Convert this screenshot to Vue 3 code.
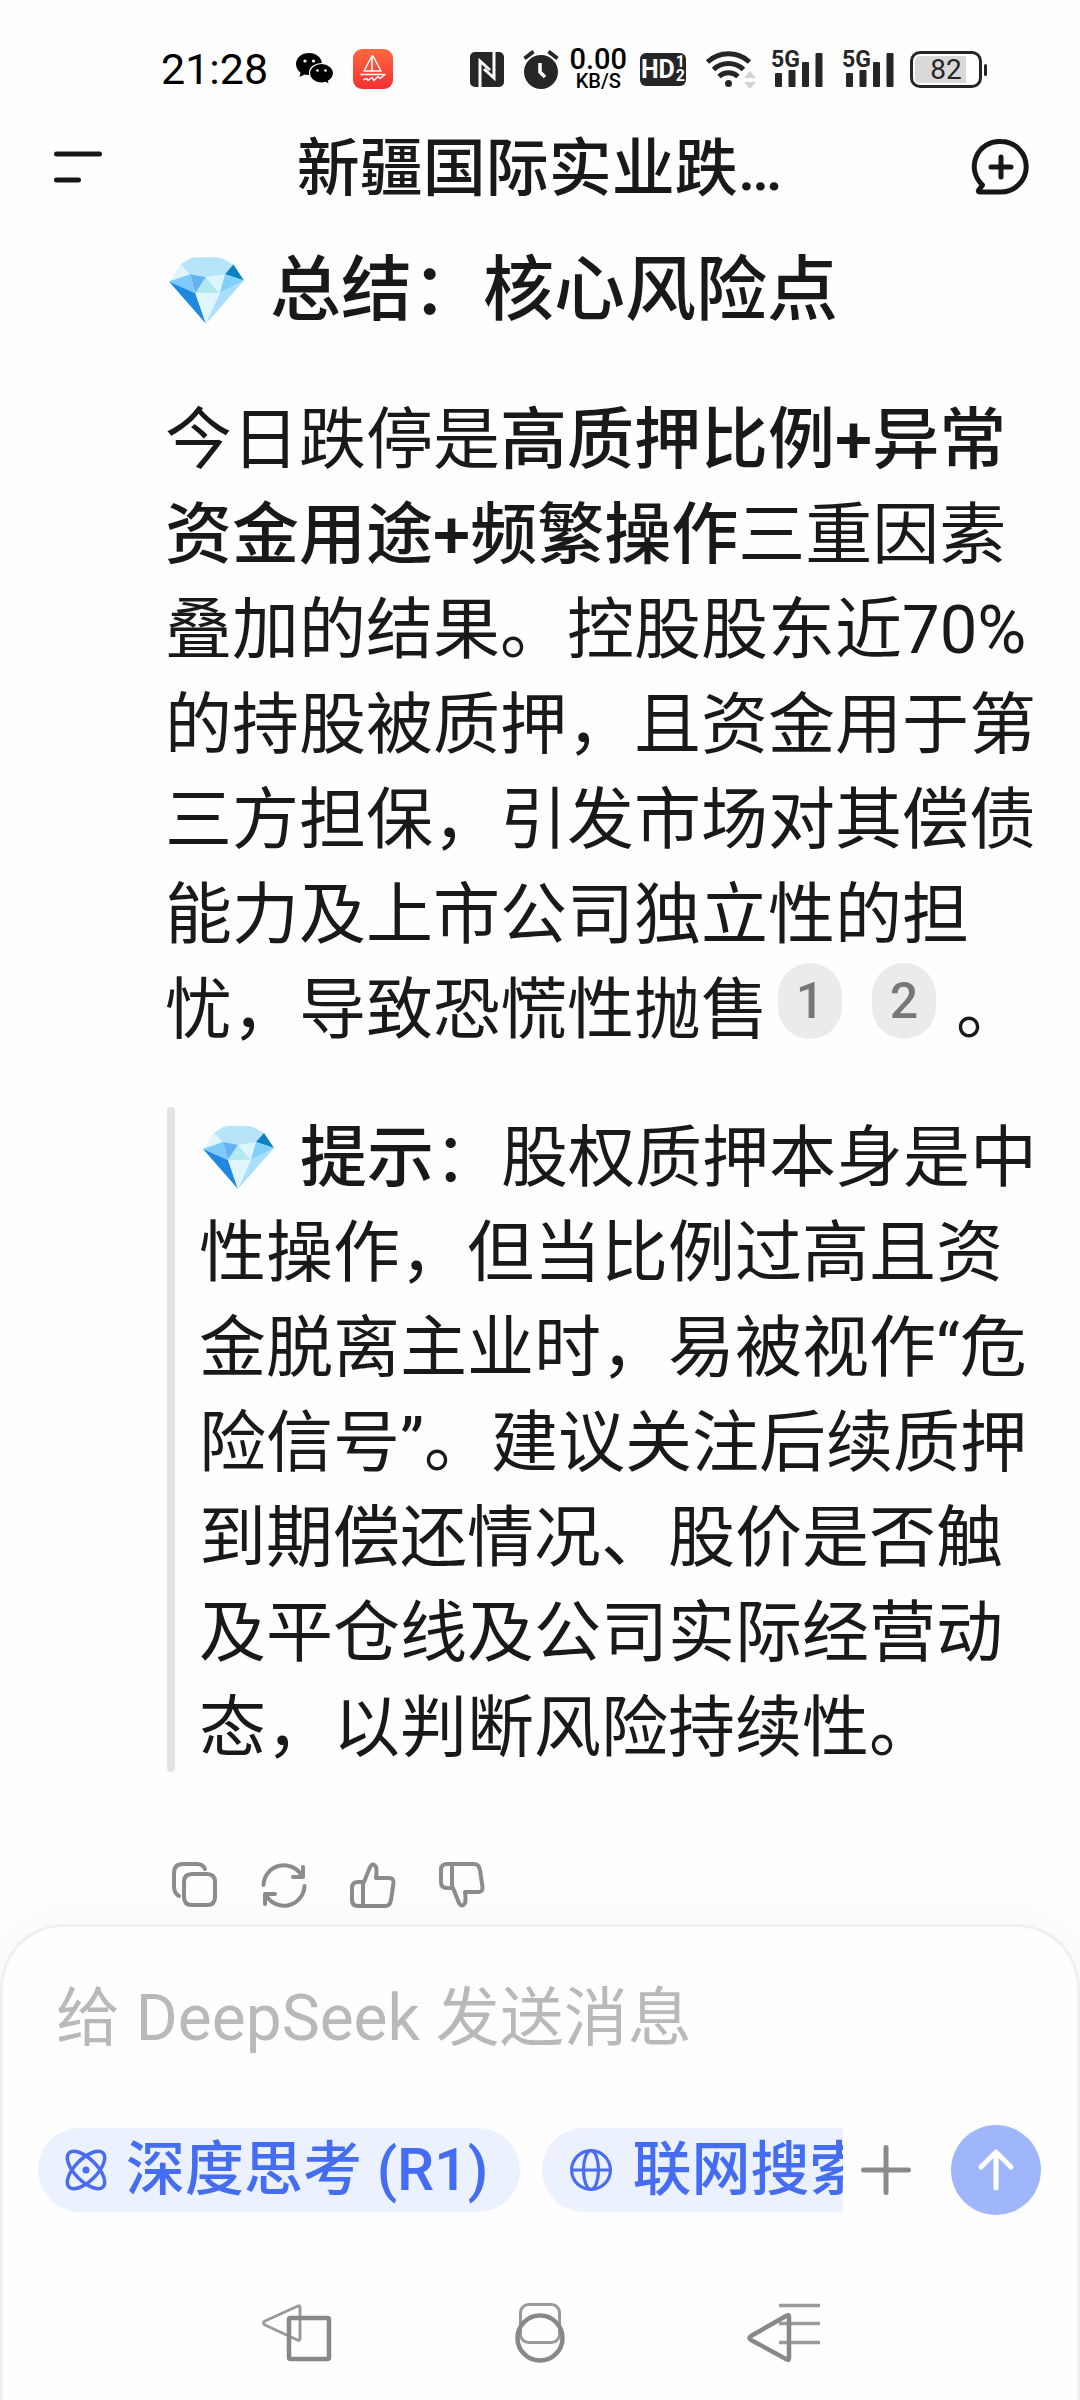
<template>
  <div class="screen" lang="zh-CN">
    <div class="status-bar">
      <div class="status-left">
        <span class="clock">21:28</span>
        <svg class="wechat" width="38" height="32" viewBox="0 0 38 32">
          <path d="M13 0C5.500 0 0 4.800 0 11c0 3.500 1.800 6.600 4.600 8.600L3.500 24l5-2.600c1.400.4 3 .6 4.500.6 7.200 0 13-4.800 13-11S20.200 0 13 0z" fill="#000" />
          <path d="M25.500 10.500c-6.600 0-12 4.300-12 9.700s5.400 9.800 12 9.800c1.400 0 2.800-.2 4-.6l4 2.200-1-3.600c3-1.800 5-4.600 5-7.800 0-5.400-5.400-9.700-12-9.700z" fill="#000" stroke="#fff" stroke-width="1.200" />
          <circle cx="9" cy="8" r="1.600" fill="#fff" /><circle cx="17.500" cy="8" r="1.600" fill="#fff" />
          <circle cx="21.500" cy="17.500" r="1.300" fill="#fff" /><circle cx="29.500" cy="17.500" r="1.300" fill="#fff" />
        </svg>
        <svg class="boat" width="40" height="40" viewBox="0 0 40 40">
          <defs>
            <linearGradient id="boatBg" x1="0" y1="0" x2="0" y2="1">
              <stop offset="0" stop-color="#fb6a3e" /><stop offset="1" stop-color="#f62f33" />
            </linearGradient>
          </defs>
          <rect width="40" height="40" rx="9" fill="url(#boatBg)" />
          <g fill="none" stroke="#fff" stroke-width="1.500" stroke-linejoin="round" stroke-linecap="round">
            <path d="M19 7v15M19 7l-8 15h17L20 7" />
            <path d="M8 25.500h24l-5 4-2-2-4 4-2-3-4 3-1-2-3 1" />
          </g>
        </svg>
      </div>
      <div class="status-right">
        <svg width="34" height="35" viewBox="0 0 34 35">
          <rect width="34" height="35" rx="5" fill="#262626" />
          <path d="M10 35V9l10 9M24 0v26L14 17" fill="none" stroke="#fff" stroke-width="3" />
        </svg>
        <svg class="alarm" width="36" height="39" viewBox="0 0 36 39">
          <circle cx="18" cy="22" r="17" fill="#262626" />
          <path d="M1.500 8.500l9-7M34.500 8.500l-9-7" stroke="#262626" stroke-width="4" />
          <path d="M17 13v9l5 5" fill="none" stroke="#fff" stroke-width="3.500" />
        </svg>
        <div class="speed"><span class="speed-num">0.00</span><span class="speed-unit">KB/S</span></div>
        <div class="hd"><span>HD</span><span class="hd-sim"><i>1</i><i>2</i></span></div>
        <svg class="wifi" width="46" height="40" viewBox="0 0 46 40">
          <g fill="none" stroke="#262626" stroke-width="5">
            <path d="M1.500 13a31 31 0 0 1 42 0" /><path d="M7.500 20.500a22 22 0 0 1 30 0" /><path d="M13 27.500a14 14 0 0 1 19 0" />
          </g>
          <circle cx="22.500" cy="34.500" r="3.500" fill="#262626" />
          <path d="M38 29l6-7 6 7zM38 33l6 7 6-7z" fill="#d4d4d4" />
        </svg>
        <div v-for="n in 2" :key="n" class="signal">
          <span>5G</span>
          <svg width="48" height="35" viewBox="0 0 48 35" fill="#262626">
            <rect y="21" width="7" height="14" rx="1" /><rect x="13.500" y="18" width="7" height="17" rx="1" />
            <rect x="27" y="10" width="7" height="25" rx="1" /><rect x="40.500" y="1" width="7" height="34" rx="1" />
          </svg>
        </div>
        <div class="battery"><span>82</span></div>
      </div>
    </div>

    <header class="top-bar">
      <button class="icon-btn" aria-label="菜单">
        <svg width="48" height="32" viewBox="0 0 48 32" stroke="#17171a" stroke-width="5" stroke-linecap="round">
          <path d="M2.500 3h43M2.500 29h22" />
        </svg>
      </button>
      <h1>新疆国际实业跌…</h1>
      <button class="icon-btn" aria-label="新对话">
        <svg width="56" height="56" viewBox="0 0 56 56" fill="none" stroke="#17171a" stroke-width="5" stroke-linecap="round" stroke-linejoin="round">
          <path d="M28 2.500a25 25 0 0 1 0 50.500H6.500c-1 0-1.500-1-.8-1.800L9.500 46A25 25 0 0 1 28 2.500z" />
          <path d="M28 18v20M18 28h20" />
        </svg>
      </button>
    </header>

    <main class="answer">
      <h2>
        <svg class="gem gem-lg" viewBox="0 0 71 63"><polygon v-for="g in gem" :key="g[0]" :points="g[0]" :fill="g[1]" /></svg>总结：核心风险点
      </h2>
      <p>今日跌停是<b>高质押比例+异常资金用途+频繁操作</b>三重因素叠加的结果。控股股东近70%的持股被质押，且资金用于第三方担保，引发市场对其偿债能力及上市公司独立性的担忧，导致恐慌性抛售<a class="cite" href="#ref-1">1</a><a class="cite" href="#ref-2">2</a>。</p>
      <blockquote>
        <svg class="gem" viewBox="0 0 71 63"><polygon v-for="g in gem" :key="g[0]" :points="g[0]" :fill="g[1]" /></svg><b>提示</b>：股权质押本身是中性操作，但当比例过高且资金脱离主业时，易被视作“危险信号”。建议关注后续质押到期偿还情况、股价是否触及平仓线及公司实际经营动态，以判断风险持续性。
      </blockquote>
      <div class="actions">
        <button v-for="a in actions" :key="a.label" class="icon-btn" :aria-label="a.label">
          <svg width="46" height="46" viewBox="0 0 46 46" fill="none" stroke="#8c8c8c" stroke-width="4" stroke-linecap="round" stroke-linejoin="round">
            <path v-for="d in a.paths" :key="d" :d="d" />
          </svg>
        </button>
      </div>
    </main>

    <footer class="composer">
      <input v-model="message" type="text" placeholder="给 DeepSeek 发送消息" aria-label="给 DeepSeek 发送消息" />
      <div class="tools">
        <div class="chips">
          <button class="chip">
            <svg width="40" height="40" viewBox="0 0 40 40" fill="none" stroke="#4a6cf0" stroke-width="3.500">
              <ellipse cx="20" cy="20" rx="24" ry="11" transform="rotate(45 20 20)" />
              <ellipse cx="20" cy="20" rx="24" ry="11" transform="rotate(-45 20 20)" />
              <circle cx="20" cy="20" r="3.500" fill="#4a6cf0" stroke="none" />
            </svg>
            深度思考 (R1)
          </button>
          <button class="chip">
            <svg width="42" height="42" viewBox="0 0 42 42" fill="none" stroke="#4a6cf0" stroke-width="3.200">
              <circle cx="21" cy="21" r="19.400" /><ellipse cx="21" cy="21" rx="7.500" ry="19.400" /><path d="M2 21h38" />
            </svg>
            联网搜索
          </button>
        </div>
        <button class="icon-btn plus" aria-label="添加">
          <svg width="50" height="50" viewBox="0 0 50 50" stroke="#8a8a8a" stroke-width="5" stroke-linecap="round"><path d="M25 2.500v45M2.500 25h45" /></svg>
        </button>
        <button class="send" aria-label="发送">
          <svg width="36" height="42" viewBox="0 0 36 42" fill="none" stroke="#fff" stroke-width="5" stroke-linecap="round" stroke-linejoin="round"><path d="M18 39V3M3 18L18 3l15 15" /></svg>
        </button>
      </div>
      <nav class="sys-nav">
        <button class="icon-btn" aria-label="最近任务">
          <svg width="72" height="62" viewBox="0 0 72 62" fill="none" stroke-linejoin="round">
            <path d="M37 4q2 -1 2 2v30q0 3-2.500 2L4 23q-3-2 0-4z" stroke="#9a9a9a" stroke-width="3" />
            <rect x="28" y="16" width="40" height="41" rx="1.500" stroke="#888" stroke-width="4.500" />
          </svg>
        </button>
        <button class="icon-btn" aria-label="主屏幕">
          <svg width="52" height="62" viewBox="0 0 52 62" fill="none">
            <rect x="6.500" y="2.500" width="39" height="38" rx="8" stroke="#9a9a9a" stroke-width="3" />
            <circle cx="26" cy="36" r="22.500" stroke="#888" stroke-width="4.500" />
          </svg>
        </button>
        <button class="icon-btn" aria-label="返回">
          <svg width="74" height="62" viewBox="0 0 74 62" fill="none" stroke-linejoin="round">
            <path d="M32 3.500h41M32 21.500h41M32 40.500h41" stroke="#9a9a9a" stroke-width="3.500" />
            <path d="M39 14q3-2 3 1v41q0 3-3 1L4 38q-3-2 0-4z" stroke="#888" stroke-width="4.500" />
          </svg>
        </button>
      </nav>
    </footer>
  </div>
</template>

<script setup>
import { ref } from 'vue'

const message = ref('')

// facets of the gem: points, colour
const gem = [
  ['11,7 20,1 24,0 46,0 50,1 61,7 53,17 35,20 20,17', '#b7e3fb'],
  ['11,7 0,23 20,16', '#e0f6ff'],
  ['61,7 71,22 53,16', '#0d80bf'],
  ['0,23 20,16 25,34', '#7fc9fb'],
  ['20,16 35,19 25,34', '#64b1f4'],
  ['35,19 25,34 48,34', '#b0eaee'],
  ['35,19 53,16 48,34', '#dcf6fd'],
  ['53,16 71,22 48,34', '#80d0fb'],
  ['0,23 25,34 35,63', '#1f88e0'],
  ['25,34 48,34 35,63', '#dff5ff'],
  ['48,34 71,22 35,63', '#aadefe'],
]

const actions = [
  { label: '复制', paths: ['M20 12h15q8 0 8 8v15q0 8-8 8H20q-8 0-8-8V20q0-8 8-8z', 'M33 7q-2-5-8-5H11q-9 0-9 9v14q0 6 5 9'] },
  { label: '重新生成', paths: ['M2.500 23A20.500 20.500 0 0 1 41 14M42 5v10H32', 'M43.500 24A20.500 20.500 0 0 1 5 33M4 42V32h10'] },
  { label: '喜欢', paths: ['M14 20L20 5q3-5 6 0 1 3 0 11h13q5 0 4.500 5L41 38q-1 6-6 6H8q-6 0-6-6V26q0-6 6-6z', 'M13 20v24'] },
  { label: '不喜欢', paths: ['M14 26l6 15q3 5 6 0 1-3 0-11h13q5 0 4.500-5L41 8q-1-6-6-6H8Q2 2 2 8v12q0 6 6 6z', 'M13 26V2'] },
]
</script>

<style>
body { margin: 0; background: #fff; }
</style>

<style scoped>
.screen {
  display: flex;
  flex-direction: column;
  min-height: 100vh;
  overflow: hidden;
  background: #fefefe;
  color: #19191c;
  font-family: Roboto, "Noto Sans CJK SC", sans-serif;
}
svg { display: block; flex: none; overflow: visible; }
button { font: inherit; border: 0; padding: 0; background: none; color: inherit; cursor: pointer; }
.icon-btn { display: flex; flex: none; }

.status-bar {
  display: flex;
  align-items: center;
  justify-content: space-between;
  height: 98px;
  padding: 20px 98px 0 161px;
}
.status-left, .status-right { display: flex; align-items: center; }
.clock { font-size: 43px; line-height: 48px; color: #000; }
.wechat { margin-left: 28px; }
.boat { margin-left: 19px; }
.alarm { margin-left: 19px; }
.speed { display: flex; flex-direction: column; align-items: center; margin-left: 10px; color: #000; font-weight: 500; }
.speed-num { font-size: 29px; line-height: 24px; }
.speed-unit { font-size: 20px; line-height: 20px; }
.hd {
  display: flex;
  align-items: center;
  justify-content: center;
  gap: 1px;
  width: 46px;
  height: 33px;
  margin-left: 13px;
  border-radius: 6px;
  background: #262626;
  color: #fff;
  font-family: "Liberation Sans Narrow", Roboto, sans-serif;
  font-size: 25px;
  font-weight: 700;
}
.hd-sim { display: flex; flex-direction: column; font-size: 16px; line-height: 14px; }
.hd-sim i { font-style: normal; }
.wifi { margin-left: 20px; }
.signal { position: relative; margin-left: 19px; padding-left: 4px; }
.signal span {
  position: absolute;
  left: 0;
  top: -4px;
  font-family: "Liberation Sans Narrow", Roboto, sans-serif;
  font-size: 23px;
  line-height: 23px;
  font-weight: 700;
  color: #262626;
}
.battery {
  position: relative;
  width: 62px;
  height: 27px;
  margin-left: 16px;
  padding: 2px;
  border: 3px solid #262626;
  border-radius: 10px;
  background: linear-gradient(90deg, #d9d9d9 82%, #fff 82%) content-box;
}
.battery span { display: block; font-size: 28px; line-height: 28px; text-align: center; color: #262626; }
.battery::after {
  content: "";
  position: absolute;
  right: -8px;
  top: 10px;
  width: 3px;
  height: 12px;
  border-radius: 2px;
  background: #262626;
}

.top-bar { display: flex; align-items: center; justify-content: space-between; height: 98px; padding: 0 51px 0 54px; }
h1 { margin: 0; padding: 4px 0 0 4px; font-size: 63px; line-height: 94px; font-weight: 500; }

.answer { padding: 26px 35px 16px 165px; font-size: 67px; line-height: 95px; }
h2 { display: flex; align-items: center; margin: 0 0 55px; font-size: 71px; line-height: 96px; font-weight: 500; }
b { font-weight: 500; }
p { margin: 0 0 49px; }
.gem { display: inline-block; width: 71px; height: 63px; margin: 0 26px 0 4px; vertical-align: -8px; }
.gem-lg { width: 75px; height: 67px; }
.cite {
  display: inline-block;
  width: 64px;
  height: 76px;
  margin: 0 20px 0 10px;
  border-radius: 32px;
  background: #ebebeb;
  color: #777;
  font-size: 50px;
  line-height: 76px;
  font-weight: 500;
  text-align: center;
  text-decoration: none;
  vertical-align: top;
}
.cite + .cite { margin-left: 10px; }
blockquote { position: relative; margin: 0; padding: 4px 0 0 34px; }
blockquote::before {
  content: "";
  position: absolute;
  left: 2px;
  top: 0;
  bottom: 4px;
  width: 8px;
  border-radius: 4px;
  background: #e3e3e3;
}
.actions { display: flex; gap: 43px; margin-top: 86px; padding-left: 7px; }

.composer {
  flex: 1;
  padding: 51px 36px 35px 35px;
  border: 3px solid #f0f0f0;
  border-bottom: 0;
  border-radius: 64px 64px 0 0;
  background: #fefefe;
  box-shadow: 0 -8px 48px rgba(0, 0, 0, 0.03);
}
input {
  display: block;
  width: 100%;
  box-sizing: border-box;
  height: 80px;
  padding: 0 18px;
  border: 0;
  outline: 0;
  background: none;
  color: inherit;
  font: inherit;
  font-size: 64px;
}
input::placeholder { color: #b9b9b9; opacity: 1; }
.tools { display: flex; align-items: center; margin-top: 67px; }
.chips { display: flex; flex: 1; gap: 22px; min-width: 0; overflow: hidden; }
.chip {
  display: flex;
  flex: none;
  align-items: center;
  gap: 20px;
  height: 84px;
  padding: 0 32px 0 28px;
  border-radius: 42px;
  background: #ebf1fe;
  color: #456df2;
  font-size: 59px;
  line-height: 84px;
  font-weight: 500;
  white-space: nowrap;
}
.plus { margin: 0 40px 0 18px; }
.send {
  display: flex;
  flex: none;
  align-items: center;
  justify-content: center;
  width: 90px;
  height: 90px;
  border-radius: 50%;
  background: #9fb5fc;
}
.sys-nav { display: flex; justify-content: space-between; margin-top: 87px; padding: 0 220px 0 223px; }
</style>
